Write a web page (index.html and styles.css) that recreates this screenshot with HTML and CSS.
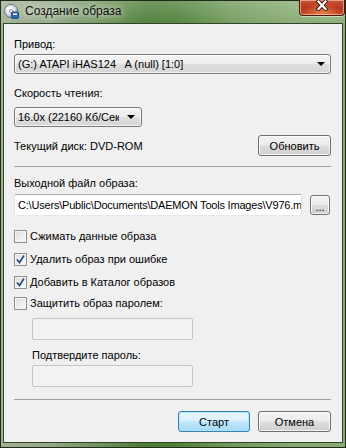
FILE: index.html
```html
<!DOCTYPE html>
<html>
<head>
    <title>Создание образа</title>
    <link rel="stylesheet" href="styles.css">
</head>
<body>
    <div class="window">
        <div class="titlebar">
            <svg class="app-icon" width="15" height="15" viewBox="0 0 15 15">
                <defs>
                    <radialGradient id="disc" cx="0.4" cy="0.35" r="0.7">
                        <stop offset="0" stop-color="#ffffff"/>
                        <stop offset="0.6" stop-color="#d4dbe3"/>
                        <stop offset="1" stop-color="#8d9bab"/>
                    </radialGradient>
                </defs>
                <circle cx="7" cy="7" r="6.5" fill="url(#disc)" stroke="#66768a" stroke-width="1"/>
                <circle cx="7" cy="7" r="1.6" fill="#f4f6f8" stroke="#7a8798" stroke-width="0.8"/>
                <rect x="7.5" y="8" width="7" height="6.5" rx="1" fill="#2f66b3" stroke="#163d7a" stroke-width="0.8"/>
                <rect x="9" y="9.5" width="4" height="1.5" fill="#ffffff"/>
            </svg>
            <span class="title">Создание образа</span>
            <div class="close-btn">
                <svg width="14" height="11" viewBox="0 0 14 11">
                    <path d="M3.5 1.5 L10.5 9 M10.5 1.5 L3.5 9" stroke="#3b140c" stroke-width="4" stroke-linecap="square"/>
                    <path d="M3.5 1.5 L10.5 9 M10.5 1.5 L3.5 9" stroke="#ffffff" stroke-width="2.2" stroke-linecap="square"/>
                </svg>
            </div>
        </div>

        <div class="client">
            <div class="label lbl-drive">Привод:</div>
            <div class="combo combo-drive">
                <span class="combo-text">(G:) ATAPI iHAS124   A (null) [1:0]</span>
                <span class="arrow"></span>
            </div>

            <div class="label lbl-speed">Скорость чтения:</div>
            <div class="combo combo-speed">
                <span class="combo-text">16.0x (22160 Кб/Сек)</span>
                <span class="arrow"></span>
            </div>

            <div class="disk-row">
                <span>Текущий диск: DVD-ROM</span>
                <button class="btn">Обновить</button>
            </div>

            <div class="separator sep-top"></div>

            <div class="label lbl-file">Выходной файл образа:</div>
            <div class="file-row">
                <div class="textbox file-box">C:\Users\Public\Documents\DAEMON Tools Images\V976.mds</div>
                <button class="btn btn-browse">...</button>
            </div>

            <label class="check-row row-1"><span class="checkbox"></span>Сжимать данные образа</label>
            <label class="check-row row-n"><span class="checkbox checked"><svg width="11" height="11" viewBox="0 0 11 11"><path d="M2 5.5 L4.5 8.5 L9 1.5" fill="none" stroke="#274a86" stroke-width="1.7"/></svg></span>Удалить образ при ошибке</label>
            <label class="check-row row-n"><span class="checkbox checked"><svg width="11" height="11" viewBox="0 0 11 11"><path d="M2 5.5 L4.5 8.5 L9 1.5" fill="none" stroke="#274a86" stroke-width="1.7"/></svg></span>Добавить в Каталог образов</label>
            <label class="check-row row-last"><span class="checkbox"></span>Защитить образ паролем:</label>

            <div class="textbox pw-box pw-first"></div>
            <div class="label lbl-confirm">Подтвердите пароль:</div>
            <div class="textbox pw-box pw-second"></div>

            <div class="separator sep-bottom"></div>

            <div class="actions">
                <button class="btn btn-default">Старт</button>
                <button class="btn">Отмена</button>
            </div>
        </div>
    </div>
</body>
</html>
```

FILE: styles.css
```css
body {
    margin: 0;
    font-family: "Liberation Sans", Arial, sans-serif;
    font-size: 11px;
    color: #000;
    overflow: hidden;
}
.window {
    width: 346px;
    height: 448px;
    box-sizing: border-box;
    border: 1px solid #1e2c19;
    padding: 0 2px 4px 2px;
    display: flex;
    flex-direction: column;
    background:
        linear-gradient(180deg, rgba(255, 255, 255, 0.22) 0, rgba(255, 255, 255, 0.05) 22px, rgba(0, 0, 0, 0) 30px),
        linear-gradient(90deg, #a2b095 0, #93a786 50px, #6c9258 100px, #4c7b35 145px, #4f7f38 175px, #6f9a5a 230px, #85a970 290px, #8aac74 346px);
}
.titlebar {
    height: 22px;
    display: flex;
    align-items: flex-start;
}
.app-icon {
    margin: 3px 0 0 1px;
    flex-shrink: 0;
}
.title {
    margin: 3px 0 0 6px;
    font-size: 12px;
    line-height: 15px;
    color: #111;
    text-shadow: 0 0 6px rgba(255, 255, 255, 0.8), 0 0 10px rgba(255, 255, 255, 0.5);
}
.close-btn {
    margin: -1px -2px 0 auto;
    width: 46px;
    height: 16px;
    box-sizing: border-box;
    border: 1px solid #4a1a10;
    border-top: none;
    border-radius: 0 0 4px 4px;
    box-shadow: inset 0 0 0 1px rgba(255, 220, 200, 0.55), 0 1px 0 rgba(255, 255, 255, 0.5);
    background:
        radial-gradient(ellipse at 50% 100%, rgba(240, 150, 90, 0.8) 0, rgba(240, 150, 90, 0) 60%),
        linear-gradient(180deg, #c9553c 0, #b7381f 50%, #c44a2a 100%);
    display: flex;
    justify-content: center;
    align-items: flex-start;
}
.client {
    flex: 1;
    background: #f0f0f0;
    border: 1px solid #33442c;
    padding: 13px 11px 0 10px;
    display: flex;
    flex-direction: column;
}
.label {
    line-height: 14px;
    height: 14px;
}
.lbl-speed { margin-top: 12px; }
.lbl-file { margin-top: 9px; }
.lbl-confirm { margin: 8px 0 0 18px; }
.combo {
    height: 20px;
    box-sizing: border-box;
    border: 1px solid #7a7a7a;
    border-radius: 3px;
    background: linear-gradient(180deg, #f4f4f4 0, #ececec 50%, #dfdfdf 51%, #d6d6d6 100%);
    box-shadow: inset 0 0 0 1px rgba(255, 255, 255, 0.7);
    display: flex;
    align-items: center;
    padding: 0 5px 0 3px;
}
.combo-drive {
    margin-top: 3px;
}
.combo-speed {
    margin-top: 7px;
    width: 128px;
}
.combo-text {
    flex: 1;
    white-space: pre;
    overflow: hidden;
}
.combo-speed .combo-text {
    flex: none;
    width: 101px;
}
.combo-speed .arrow {
    margin-left: auto;
    margin-right: 1px;
}
.arrow {
    width: 0;
    height: 0;
    border-left: 4px solid transparent;
    border-right: 4px solid transparent;
    border-top: 4px solid #000;
}
.disk-row {
    margin-top: 8px;
    height: 21px;
    display: flex;
    justify-content: space-between;
    align-items: center;
}
.btn {
    font-family: "Liberation Sans", Arial, sans-serif;
    font-size: 11px;
    color: #000;
    width: 73px;
    height: 21px;
    box-sizing: border-box;
    border: 1px solid #707070;
    border-radius: 3px;
    background: linear-gradient(180deg, #f3f3f3 0, #ebebeb 48%, #dddddd 52%, #cfcfcf 100%);
    box-shadow: inset 0 0 0 1px rgba(255, 255, 255, 0.75);
    padding: 0;
}
.btn-default {
    border-color: #3c7fb1;
    background: linear-gradient(180deg, #eaf6fd 0, #d9f0fc 48%, #bee6fd 52%, #a7d9f5 100%);
    box-shadow: inset 0 0 0 1px rgba(160, 230, 255, 0.9);
    width: 72px;
}
.separator {
    height: 1px;
    background: #a0a0a0;
}
.sep-top { margin-top: 10px; }
.sep-bottom { margin-top: 12px; }
.file-row {
    margin-top: 4px;
    display: flex;
    align-items: center;
    gap: 8px;
}
.textbox {
    height: 22px;
    box-sizing: border-box;
    border: 1px solid #abadb3;
    border-left-color: #e2e3ea;
    border-right-color: #dbdfe6;
    border-bottom-color: #e3e9ef;
    border-radius: 2px;
    background: #fff;
}
.file-box {
    width: 288px;
    padding: 0 3px;
    line-height: 20px;
    letter-spacing: -0.2px;
    white-space: pre;
    overflow: hidden;
}
.btn-browse {
    width: 20px;
    height: 20px;
    line-height: 12px;
    padding-top: 4px;
}
.check-row {
    height: 16px;
    display: flex;
    align-items: center;
}
.row-1 { margin-top: 12px; }
.row-n { margin-top: 7px; }
.row-last { margin-top: 5px; }
.checkbox {
    width: 13px;
    height: 13px;
    box-sizing: border-box;
    border: 1px solid #8e8f8f;
    background: linear-gradient(135deg, #dcdcdc 0, #f0f0f0 60%, #fbfbfb 100%);
    box-shadow: inset 0 0 0 1px #f4f4f4;
    margin-right: 3px;
    display: flex;
    align-items: center;
    justify-content: center;
}
.pw-box {
    width: 161px;
    margin-left: 18px;
    background: #f3f3f3;
    border-color: #c4c4c4;
}
.pw-first { margin-top: 7px; }
.pw-second { margin-top: 3px; }
.actions {
    margin-top: 11px;
    display: flex;
    justify-content: flex-end;
    gap: 8px;
}
```
